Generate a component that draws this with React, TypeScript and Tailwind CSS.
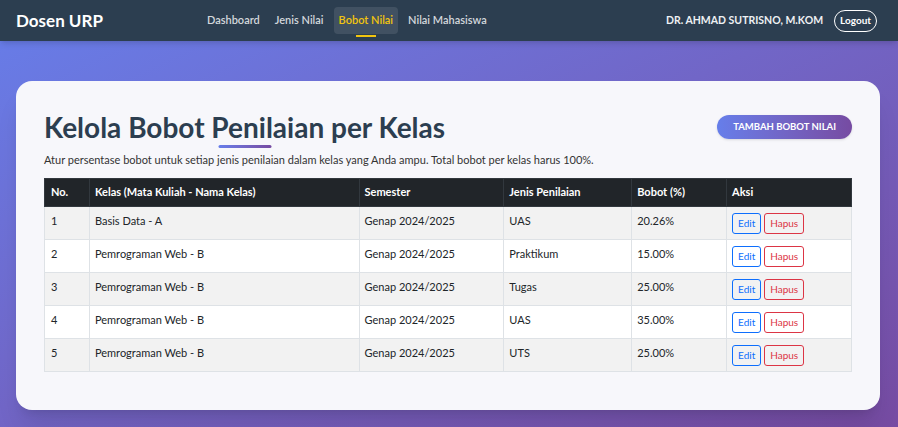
import React from "react";

const ROWS = [
  { no: 1, kelas: "Basis Data - A", semester: "Genap 2024/2025", jenis: "UAS", bobot: "20.26%" },
  { no: 2, kelas: "Pemrograman Web - B", semester: "Genap 2024/2025", jenis: "Praktikum", bobot: "15.00%" },
  { no: 3, kelas: "Pemrograman Web - B", semester: "Genap 2024/2025", jenis: "Tugas", bobot: "25.00%" },
  { no: 4, kelas: "Pemrograman Web - B", semester: "Genap 2024/2025", jenis: "UAS", bobot: "35.00%" },
  { no: 5, kelas: "Pemrograman Web - B", semester: "Genap 2024/2025", jenis: "UTS", bobot: "25.00%" },
];

const NAV = ["Dashboard", "Jenis Nilai", "Bobot Nilai", "Nilai Mahasiswa"];

function Navbar() {
  return (
    <nav className="flex h-[41px] items-center bg-[#2c3e50] pl-4 pr-[21px] shadow-md">
      <span className="text-[17px] font-bold text-white">Dosen URP</span>
      <div className="ml-[99px] flex items-center gap-[5px]">
        {NAV.map((item) => {
          const active = item === "Bobot Nilai";
          return (
            <div
              key={item}
              className={`relative flex h-[27px] items-center rounded px-[5px] text-[11px] font-semibold ${
                active ? "bg-white/10 text-[#f1c40f]" : "text-[#d3d7dc]"
              }`}
            >
              {item}
              {active && (
                <span className="absolute bottom-[-3px] left-1/2 h-[2px] w-[20px] -translate-x-1/2 bg-[#f1c40f]" />
              )}
            </div>
          );
        })}
      </div>
      <div className="ml-auto flex items-center gap-[11px]">
        <span className="text-[10.5px] font-bold text-[#eef0f3]">DR. AHMAD SUTRISNO, M.KOM</span>
        <button className="h-[22px] rounded-full border border-white px-[5px] text-[10px] font-bold text-white">
          Logout
        </button>
      </div>
    </nav>
  );
}

export default function App() {
  return (
    <div
      className="min-h-[427px] bg-gradient-to-br from-[#667eea] to-[#764ba2]"
      style={{ fontFamily: 'Lato, "Noto Sans", sans-serif' }}
    >
      <Navbar />

      <div className="px-4 pt-[40px] pb-[18px]">
        <div className="w-[864px] rounded-2xl bg-[#f7f7fb] px-[28px] pt-[28px] pb-[38px] shadow-xl">
          {/* Header */}
          <div className="flex items-center justify-between">
            <h2 className="relative text-[28px] font-bold leading-[36px] text-[#2c3e50]">
              Kelola Bobot Penilaian per Kelas
              <span className="absolute bottom-[-3px] left-1/2 h-[3px] w-[53px] -translate-x-1/2 rounded bg-gradient-to-r from-[#667eea] to-[#764ba2]" />
            </h2>
            <button className="h-[24px] rounded-full bg-gradient-to-r from-[#667eea] to-[#764ba2] px-[16px] text-[9.5px] font-bold uppercase text-white shadow">
              Tambah Bobot Nilai
            </button>
          </div>
          <p className="mt-[7px] text-[11px] leading-[16px] text-[#333]">
            Atur persentase bobot untuk setiap jenis penilaian dalam kelas yang Anda ampu. Total bobot per kelas harus 100%.
          </p>

          {/* Table */}
          <table className="mt-[10px] w-[808px] border-collapse text-[11px] text-[#212529]">
            <thead>
              <tr className="h-[28px] bg-[#212529] text-left text-white">
                <th className="w-[45px] border border-[#32383e] px-[6px] font-bold">No.</th>
                <th className="w-[270px] border border-[#32383e] px-[5px] font-bold">Kelas (Mata Kuliah - Nama Kelas)</th>
                <th className="w-[145px] border border-[#32383e] px-[5px] font-bold">Semester</th>
                <th className="w-[128px] border border-[#32383e] px-[5px] font-bold">Jenis Penilaian</th>
                <th className="w-[95px] border border-[#32383e] px-[5px] font-bold">Bobot (%)</th>
                <th className="w-[125px] border border-[#32383e] px-[5px] font-bold">Aksi</th>
              </tr>
            </thead>
            <tbody>
              {ROWS.map((r, i) => (
                <tr key={r.no} className={i % 2 === 0 ? "bg-[#f2f2f2]" : "bg-white"}>
                  <td className="border border-[#dee2e6] px-[6px] py-[6px] align-top leading-[16px]">{r.no}</td>
                  <td className="border border-[#dee2e6] px-[5px] py-[6px] align-top leading-[16px]">{r.kelas}</td>
                  <td className="border border-[#dee2e6] px-[5px] py-[6px] align-top leading-[16px]">{r.semester}</td>
                  <td className="border border-[#dee2e6] px-[5px] py-[6px] align-top leading-[16px]">{r.jenis}</td>
                  <td className="border border-[#dee2e6] px-[5px] py-[6px] align-top leading-[16px]">{r.bobot}</td>
                  <td className="border border-[#dee2e6] px-[5px] py-[5.5px] align-top">
                    <div className="flex gap-[3px]">
                      <button className="h-[21px] rounded-[3px] border border-[#0d6efd] px-[5px] text-[10px] text-[#0d6efd]">
                        Edit
                      </button>
                      <button className="h-[21px] rounded-[3px] border border-[#dc3545] px-[5px] text-[10px] text-[#dc3545]">
                        Hapus
                      </button>
                    </div>
                  </td>
                </tr>
              ))}
            </tbody>
          </table>
        </div>
      </div>
    </div>
  );
}
